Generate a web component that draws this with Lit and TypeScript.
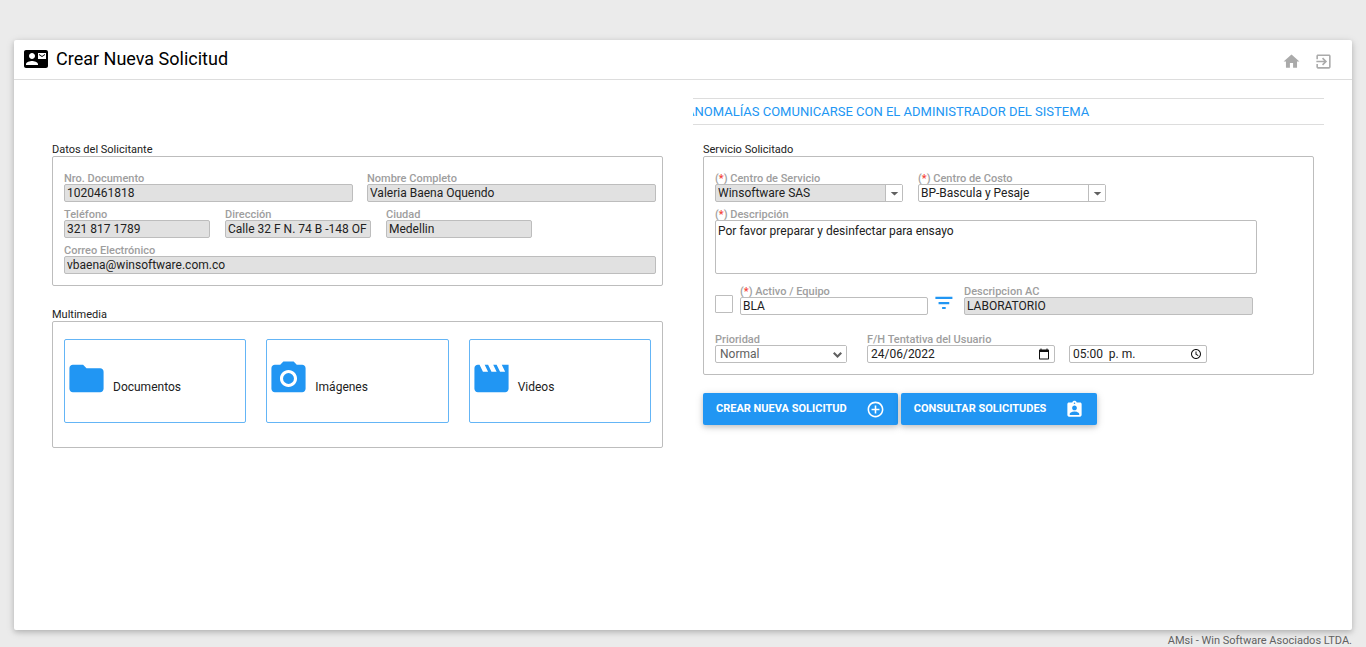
import { LitElement, html, css, svg, nothing } from "lit";
import { customElement } from "lit/decorators.js";
import { classMap } from "lit/directives/class-map.js";

const ICONS = {
  contact: "M21 8V7l-3 2-3-2v1l3 2 3-2zm1-5H2C.9 3 0 3.9 0 5v14c0 1.100.9 2 2 2h20c1.100 0 1.990-.9 1.990-2L24 5c0-1.100-.9-2-2-2zM8 6c1.660 0 3 1.340 3 3s-1.340 3-3 3-3-1.340-3-3 1.340-3 3-3zm6 12H2v-1c0-2 4-3.100 6-3.100s6 1.100 6 3.100v1zm8-6h-8V6h8v6z",
  home: "M10 20v-6h4v6h5v-8h3L12 3 2 12h3v8z",
  exit: "M10.090 15.590L11.500 17l5-5-5-5-1.410 1.410L12.670 11H3v2h9.670l-2.580 2.590zM19 3H5c-1.110 0-2 .9-2 2v4h2V5h14v14H5v-4H3v4c0 1.100.89 2 2 2h14c1.100 0 2-.9 2-2V5c0-1.100-.9-2-2-2z",
  folder: "M10 4H4c-1.100 0-1.990.9-1.990 2L2 18c0 1.100.9 2 2 2h16c1.100 0 2-.9 2-2V8c0-1.100-.9-2-2-2h-8l-2-2z",
  camera: "M12 8.800a3.200 3.200 0 1 0 0 6.400 3.200 3.200 0 1 0 0-6.400zM9 2L7.170 4H4c-1.100 0-2 .9-2 2v12c0 1.100.9 2 2 2h16c1.100 0 2-.9 2-2V6c0-1.100-.9-2-2-2h-3.170L15 2H9zm3 15c-2.760 0-5-2.240-5-5s2.240-5 5-5 5 2.240 5 5-2.240 5-5 5z",
  movie: "M18 4l2 4h-3l-2-4h-2l2 4h-3l-2-4H8l2 4H7L5 4H4c-1.100 0-1.990.9-1.990 2L2 18c0 1.100.9 2 2 2h16c1.100 0 2-.9 2-2V4h-4z",
  filter: "M.5 2.200h21.500v3H.500zM4.500 8.800h13.500v3H4.500zM9 15h4.500v2.800H9z",
  add: "M13 7h-2v4H7v2h4v4h2v-4h4v-2h-4V7zm-1-5C6.480 2 2 6.480 2 12s4.480 10 10 10 10-4.480 10-10S17.520 2 12 2zm0 18c-4.410 0-8-3.590-8-8s3.590-8 8-8 8 3.590 8 8-3.590 8-8 8z",
  badge: "M19 3h-4.180C14.400 1.840 13.300 1 12 1c-1.300 0-2.400.84-2.820 2H5c-1.100 0-2 .9-2 2v14c0 1.100.9 2 2 2h14c1.100 0 2-.9 2-2V5c0-1.100-.9-2-2-2zm-7 0c.55 0 1 .45 1 1s-.45 1-1 1-1-.45-1-1 .45-1 1-1zm0 4c1.660 0 3 1.340 3 3s-1.340 3-3 3-3-1.340-3-3 1.340-3 3-3zm6 12H6v-1.400c0-2 4-3.100 6-3.100s6 1.100 6 3.100V19z",
  calendar: "M20 3h-1V1h-2v2H7V1H5v2H4c-1.100 0-2 .9-2 2v16c0 1.100.9 2 2 2h16c1.100 0 2-.9 2-2V5c0-1.100-.9-2-2-2zm0 18H4V8h16v13z",
  clock: "M12 2C6.500 2 2 6.500 2 12s4.500 10 10 10 10-4.500 10-10S17.500 2 12 2zm0 18c-4.400 0-8-3.600-8-8s3.600-8 8-8 8 3.600 8 8-3.600 8-8 8zM13 7h-2v6l5 3 1-1.600-4-2.400z",
  caret: "M2 8h20l-10 9z",
  chevron: "M4 5L12 13 20 5l4 4L12 21 0 9z",
};

type IconName = keyof typeof ICONS;

const icon = (name: IconName, cls = "") =>
  html`<svg class="icon ${cls}" viewBox="0 0 24 24" aria-hidden="true">
    ${svg`<path d=${ICONS[name]} fill="currentColor"></path>`}
  </svg>`;

const label = (id: string, text: string, required = false) =>
  html`<label class="label" for=${id}>${required ? html`(<span class="req">*</span>) ` : nothing}${text}</label>`;

const field = (id: string, text: string, value: string, locked = true, required = false) => html`
  <div class="field">
    ${label(id, text, required)}
    <input class=${classMap({ box: true, locked })} id=${id} type="text" .value=${value} ?readonly=${locked} />
  </div>
`;

const combo = (id: string, text: string, value: string, locked = false) => html`
  <div class="field">
    ${label(id, text, true)}
    <div class="picker">
      <select class=${classMap({ box: true, locked })} id=${id}>
        <option>${value}</option>
      </select>
      <span class="drop">${icon("caret", "caret")}</span>
    </div>
  </div>
`;

@customElement("app-root")
export class AppRoot extends LitElement {
  static styles = css`
    :host {
      display: flex;
      flex-direction: column;
      box-sizing: border-box;
      min-height: 100vh;
      padding: 40px 14px 0;
      background: #ebebeb;
      color: #212121;
      font: 12px/14px Roboto, sans-serif;
    }
    * {
      box-sizing: border-box;
    }
    .icon {
      display: block;
      flex: none;
      width: 19px;
      height: 19px;
    }
    .card {
      flex: 1;
      background: #fff;
      border-radius: 2px;
      box-shadow: 0 2px 5px rgba(0, 0, 0, 0.16), 0 2px 10px rgba(0, 0, 0, 0.12);
    }
    .header {
      display: flex;
      align-items: center;
      height: 40px;
      padding: 0 19px 2px 10px;
      border-bottom: 1px solid #ddd;
    }
    .header .contact {
      width: 24px;
      height: 24px;
      color: #000;
    }
    .title {
      flex: 1;
      margin: 0 0 0 8px;
      font-size: 18px;
      line-height: 24px;
      font-weight: 400;
      color: #000;
    }
    .nav {
      display: flex;
      gap: 13px;
      padding-top: 6px;
    }
    .nav a {
      color: #aaa;
    }
    .body {
      display: grid;
      grid-template-columns: 1fr 1fr;
      column-gap: 40px;
      row-gap: 19px;
      padding: 18px 38px;
    }
    .notice {
      grid-column: 2;
      margin: 0 -10px;
      height: 27px;
      border: solid #ddd;
      border-width: 1px 0;
      overflow: hidden;
      white-space: nowrap;
      text-indent: -7px;
      font-size: 13px;
      line-height: 25px;
      font-weight: 400;
      color: #2196f3;
    }
    .col {
      min-width: 0;
    }
    .legend {
      margin: 0;
      font-size: 11px;
      line-height: 12px;
      font-weight: 400;
    }
    .panel {
      display: flex;
      flex-direction: column;
      border: 1px solid #bdbdbd;
      border-radius: 2px;
      padding: 16px 6px 11px 11px;
      gap: 7px;
    }
    .col .legend + .panel.media {
      padding: 17px 11px 24px;
    }
    .panel + .legend {
      margin-top: 23px;
    }
    .row {
      display: flex;
      gap: 15px;
      align-items: flex-end;
    }
    .row.even {
      display: grid;
      grid-template-columns: 1fr 1fr;
      gap: 14px;
    }
    .field {
      display: flex;
      flex-direction: column;
      min-width: 0;
    }
    .small .field {
      width: 146px;
    }
    .std .field {
      width: 188px;
    }
    .std .field.short {
      width: 138px;
    }
    .std .field.narrow {
      width: 132px;
      margin-right: 6px;
    }
    .std .wide .field {
      width: 289px;
    }
    .label {
      font-size: 11px;
      line-height: 11px;
      font-weight: 500;
      color: #9e9e9e;
      white-space: nowrap;
    }
    .req {
      color: #f44336;
    }
    .box {
      display: block;
      width: 100%;
      height: 18px;
      margin: 0;
      padding: 0 2px;
      border: 1px solid #bdbdbd;
      border-radius: 2px;
      background: #fff;
      color: #212121;
      font: 12px/14px Roboto, sans-serif;
      appearance: none;
      outline: none;
    }
    .box.locked {
      background: #e1e1e1;
    }
    textarea.box {
      width: 542px;
      max-width: 100%;
      height: 54px;
      padding: 3px 2px;
      resize: none;
    }
    .picker {
      position: relative;
    }
    .drop {
      position: absolute;
      inset: 1px 1px 1px auto;
      width: 17px;
      display: grid;
      place-items: center;
      border-left: 1px solid #bdbdbd;
      background: #fff;
      color: #616161;
      pointer-events: none;
    }
    .drop.plain {
      border: 0;
    }
    .icon.caret {
      width: 9px;
      height: 9px;
    }
    .icon.chev {
      width: 9px;
      height: 9px;
    }
    .icon.pick {
      width: 12px;
      height: 12px;
      color: #111;
    }
    .drop.inset {
      border: 0;
      right: 3px;
    }
    .spaced {
      padding-left: 3px;
    }
    .soft {
      color: #616161;
      padding-left: 4px;
    }
    .asset {
      gap: 7px;
      margin-top: 5px;
    }
    .planning {
      margin-top: 12px;
      gap: 14px;
    }
    .check {
      flex: none;
      width: 18px;
      height: 18px;
      margin: 0 0 2px;
      appearance: none;
      border: 1px solid #bdbdbd;
      border-radius: 1px;
      background: #fff;
    }
    .bare {
      display: block;
      padding: 0;
      border: 0;
      margin: 0 3px 1px 0;
      background: none;
      color: #2196f3;
    }
    .tiles {
      display: grid;
      grid-template-columns: repeat(3, 1fr);
      gap: 20px;
    }
    .tile {
      display: flex;
      align-items: flex-end;
      gap: 6px;
      padding: 18px 1px 23px;
      border: 1px solid #64b5f6;
      border-radius: 2px;
      background: #fff;
      color: #212121;
      font: 12px/14px Roboto, sans-serif;
    }
    .tile .icon {
      width: 41px;
      height: 41px;
      color: #2196f3;
    }
    .tile span {
      padding-bottom: 5px;
    }
    .actions {
      display: flex;
      gap: 3px;
      margin-top: 18px;
    }
    .action {
      display: flex;
      align-items: center;
      gap: 19px;
      height: 32px;
      padding: 0 13px;
      border: 0;
      border-radius: 2px;
      background: #2196f3;
      color: #fff;
      font: 700 11px/16px Roboto, sans-serif;
      box-shadow: 0 2px 5px rgba(0, 0, 0, 0.16), 0 2px 10px rgba(0, 0, 0, 0.12);
    }
    .footer {
      padding-top: 5px;
      text-align: right;
      font-size: 11px;
      line-height: 12px;
      color: #616161;
    }
  `;

  private applicant() {
    return html`
      <h2 class="legend">Datos del Solicitante</h2>
      <div class="panel">
        <div class="row even">
          ${field("doc", "Nro. Documento", "1020461818")}
          ${field("name", "Nombre Completo", "Valeria Baena Oquendo")}
        </div>
        <div class="row small">
          ${field("phone", "Teléfono", "321 817 1789")}
          ${field("address", "Dirección", "Calle 32 F N. 74 B -148 OF 201")}
          ${field("city", "Ciudad", "Medellin")}
        </div>
        ${field("mail", "Correo Electrónico", "vbaena@winsoftware.com.co")}
      </div>
    `;
  }

  private media() {
    const tiles: [IconName, string][] = [
      ["folder", "Documentos"],
      ["camera", "Imágenes"],
      ["movie", "Videos"],
    ];
    return html`
      <h2 class="legend">Multimedia</h2>
      <div class="panel media">
        <div class="tiles">
          ${tiles.map(([name, text]) => html`<button class="tile" type="button">${icon(name)}<span>${text}</span></button>`)}
        </div>
      </div>
    `;
  }

  private service() {
    return html`
      <h2 class="legend">Servicio Solicitado</h2>
      <div class="panel">
        <div class="row std">
          ${combo("center", "Centro de Servicio", "Winsoftware SAS", true)}
          ${combo("cost", "Centro de Costo", "BP-Bascula y Pesaje")}
        </div>
        <div class="field">
          ${label("desc", "Descripción", true)}
          <textarea class="box" id="desc" .value=${"Por favor preparar y desinfectar para ensayo"}></textarea>
        </div>
        <div class="row std asset">
          <input class="check" type="checkbox" aria-label="Activo / Equipo" />
          ${field("asset", "Activo / Equipo", "BLA", false, true)}
          <button class="bare" type="button" aria-label="Filtrar">${icon("filter")}</button>
          <div class="wide">${field("assetDesc", "Descripcion AC", "LABORATORIO")}</div>
        </div>
        <div class="row std planning">
          <div class="field narrow">
            ${label("priority", "Prioridad")}
            <div class="picker">
              <select class="box soft" id="priority">
                <option>Normal</option>
              </select>
              <span class="drop plain">${icon("chevron", "chev")}</span>
            </div>
          </div>
          <div class="field">
            ${label("date", "F/H Tentativa del Usuario")}
            <div class="picker">
              <input class="box spaced" id="date" type="text" .value=${"24/06/2022"} />
              <span class="drop inset">${icon("calendar", "pick")}</span>
            </div>
          </div>
          <div class="field short">
            <div class="picker">
              <input class="box spaced" type="text" aria-label="Hora" .value=${"05:00  p. m."} />
              <span class="drop inset">${icon("clock", "pick")}</span>
            </div>
          </div>
        </div>
      </div>
      <div class="actions">
        <button class="action" type="button">CREAR NUEVA SOLICITUD ${icon("add")}</button>
        <button class="action" type="button">CONSULTAR SOLICITUDES ${icon("badge")}</button>
      </div>
    `;
  }

  render() {
    return html`
      <main class="card">
        <header class="header">
          ${icon("contact", "contact")}
          <h1 class="title">Crear Nueva Solicitud</h1>
          <nav class="nav">
            <a href="#inicio" aria-label="Inicio">${icon("home")}</a>
            <a href="#salir" aria-label="Salir">${icon("exit")}</a>
          </nav>
        </header>
        <div class="body">
          <div class="notice">ANOMALÍAS COMUNICARSE CON EL ADMINISTRADOR DEL SISTEMA</div>
          <section class="col">${this.applicant()}${this.media()}</section>
          <section class="col">${this.service()}</section>
        </div>
      </main>
      <footer class="footer">AMsi - Win Software Asociados LTDA.</footer>
    `;
  }
}
